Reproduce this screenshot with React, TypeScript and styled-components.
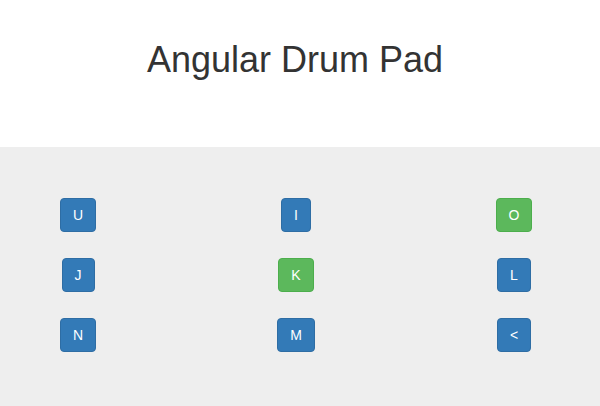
import React from "react";
import styled, { createGlobalStyle } from "styled-components";

const Global = createGlobalStyle`
  html, body { margin: 0; padding: 0; background: #fff; }
  body { font-family: "Liberation Sans", Arial, sans-serif; color: #333; }
`;

const Header = styled.header`
  height: 147px;
  box-sizing: border-box;
  padding: 40px 10px 0 0;
  display: flex;
  justify-content: center;
`;

const Title = styled.h1`
  margin: 0;
  font-size: 36px;
  font-weight: 500;
  line-height: 1.1;
  color: #333;
`;

const Pad = styled.main`
  background: #eee;
  min-height: 259px;
  box-sizing: border-box;
  padding-top: 51px;
  padding-bottom: 48px;
`;

const Grid = styled.div`
  display: grid;
  grid-template-columns: 156px 280px 156px;
  row-gap: 26px;
  justify-items: center;
`;

const Key = styled.button<{ $active?: boolean }>`
  height: 34px;
  padding: 6px 12px;
  box-sizing: border-box;
  font-family: "Liberation Sans", Arial, sans-serif;
  font-size: 14px;
  line-height: 20px;
  color: #fff;
  border-radius: 4px;
  border: 1px solid ${(p) => (p.$active ? "#4cae4c" : "#2e6da4")};
  background: ${(p) => (p.$active ? "#5cb85c" : "#337ab7")};
  cursor: pointer;
`;

const keys: { k: string; active?: boolean }[] = [
  { k: "U" },
  { k: "I" },
  { k: "O", active: true },
  { k: "J" },
  { k: "K", active: true },
  { k: "L" },
  { k: "N" },
  { k: "M" },
  { k: "<" },
];

export default function App() {
  return (
    <>
      <Global />
      <Header>
        <Title>Angular Drum Pad</Title>
      </Header>
      <Pad>
        <Grid>
          {keys.map((x) => (
            <Key key={x.k} $active={x.active}>
              {x.k}
            </Key>
          ))}
        </Grid>
      </Pad>
    </>
  );
}
